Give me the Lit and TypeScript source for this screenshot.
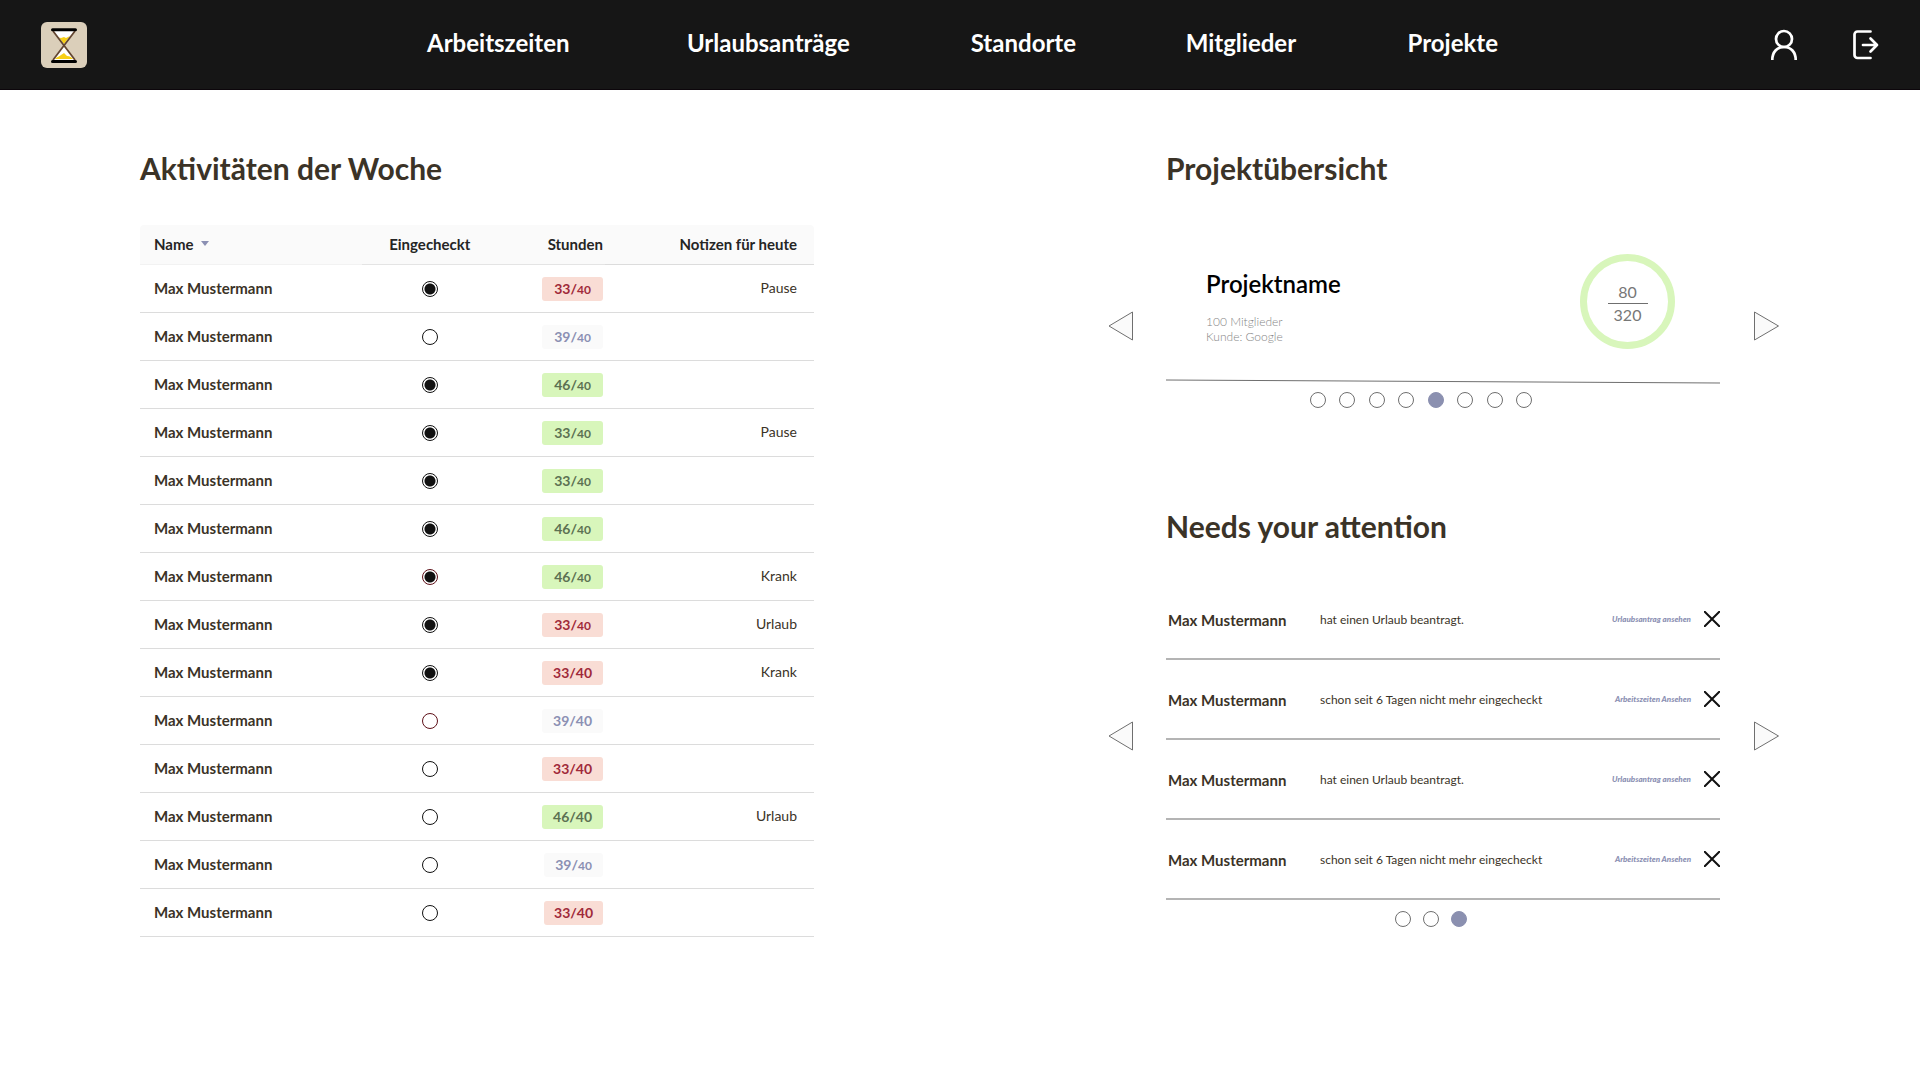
import { LitElement, html, css, svg, nothing } from "lit";
import { customElement, property, state } from "lit/decorators.js";
import { classMap } from "lit/directives/class-map.js";

type Tone = "low" | "near" | "full";

interface Activity {
  present: boolean;
  alert?: boolean;
  hours: number;
  tone: Tone;
  /** Target hours drawn at the same size as the worked hours. */
  even?: boolean;
  narrow?: boolean;
  note?: string;
}

const ACTIVITIES: Activity[] = [
  { present: true, hours: 33, tone: "low", note: "Pause" },
  { present: false, hours: 39, tone: "near" },
  { present: true, hours: 46, tone: "full" },
  { present: true, hours: 33, tone: "full", note: "Pause" },
  { present: true, hours: 33, tone: "full" },
  { present: true, hours: 46, tone: "full" },
  { present: true, alert: true, hours: 46, tone: "full", note: "Krank" },
  { present: true, hours: 33, tone: "low", note: "Urlaub" },
  { present: true, hours: 33, tone: "low", even: true, note: "Krank" },
  { present: false, alert: true, hours: 39, tone: "near", even: true },
  { present: false, hours: 33, tone: "low", even: true },
  { present: false, hours: 46, tone: "full", even: true, note: "Urlaub" },
  { present: false, hours: 39, tone: "near", narrow: true },
  { present: false, hours: 33, tone: "low", even: true, narrow: true },
];

const VACATION = { text: "hat einen Urlaub beantragt.", link: "Urlaubsantrag ansehen" };
const ABSENT = { text: "schon seit 6 Tagen nicht mehr eingecheckt", link: "Arbeitszeiten Ansehen" };
const NOTICES = [VACATION, ABSENT, VACATION, ABSENT];

const NAV = ["Arbeitszeiten", "Urlaubsanträge", "Standorte", "Mitglieder", "Projekte"];

const reset = css`
  *, *::before, *::after { box-sizing: border-box; }
  button {
    padding: 0;
    border: 0;
    background: none;
    font: inherit;
    color: inherit;
    cursor: pointer;
  }
  a { color: inherit; text-decoration: none; }
  svg { display: block; }
`;

@customElement("top-bar")
class TopBar extends LitElement {
  static styles = [reset, css`
    :host { display: block; }
    .bar {
      display: grid;
      grid-template-columns: 427fr 1071fr 422fr;
      align-items: center;
      height: 90px;
      background: #161616;
      border-bottom: 1px solid #0c060b;
      color: #fff;
    }
    .brand { justify-self: start; margin-left: 41px; }
    .nav {
      display: grid;
      grid-template-columns: 260fr 284fr 215fr 222fr 90fr;
      font-size: 24px;
      font-weight: 700;
      line-height: 30px;
      padding-bottom: 4px;
      white-space: nowrap;
    }
    .tools {
      display: flex;
      justify-content: flex-end;
      align-items: center;
      gap: 54px;
      padding-right: 40px;
    }
  `];

  render() {
    return html`
      <header class="bar">
        <a class="brand" href="#" aria-label="Startseite">
          <svg width="46" height="46" viewBox="0 0 46 46">
            <rect width="46" height="46" rx="6" fill="#dbcfba" />
            <path d="M12 9h22L23 23z M23 23l11 15H12z" fill="#fff" />
            <path d="M18 15.500l2 .5 3-1 2 1 4-2-6 8z" fill="#f7cf16" />
            <path d="M14 37c3-3 4-2 6-4l3-2 3 3c3 0 4 1 6 3z" fill="#f7cf16" />
            <path d="M12 9l22 29M34 9L12 38" stroke="#634632" stroke-width="1.800" fill="none" />
            <path d="M11.500 7.800h23M11.500 39.500h23" stroke="#000" stroke-width="3" stroke-linecap="round" />
          </svg>
        </a>
        <nav class="nav">${NAV.map((n) => html`<a href="#">${n}</a>`)}</nav>
        <div class="tools">
          <button aria-label="Profil">
            <svg width="28" height="32" viewBox="0 0 28 32" fill="none" stroke="#fff" stroke-width="2.700">
              <circle cx="14" cy="10" r="8" />
              <path d="M2.300 31C2.300 23 7 18 14 18s11.700 5 11.700 13" />
            </svg>
          </button>
          <button aria-label="Abmelden">
            <svg width="28" height="32" viewBox="0 0 28 32" fill="none" stroke="#fff" stroke-width="2.700"
              stroke-linecap="round" stroke-linejoin="round">
              <path d="M18.500 2.500H5.500a3 3 0 0 0-3 3v20.500a3 3 0 0 0 3 3h13" />
              <path d="M11 16h14M18.500 9.500l6.500 6.500-6.500 6.500" />
            </svg>
          </button>
        </div>
      </header>
    `;
  }
}

@customElement("activity-table")
class ActivityTable extends LitElement {
  static styles = [reset, css`
    :host { display: block; }
    .table {
      width: 100%;
      border-collapse: separate;
      border-spacing: 0;
      table-layout: fixed;
      font-size: 14px;
      line-height: 18px;
    }
    .c-name { width: 33%; }
    .c-check { width: 20%; }
    .c-hours { width: 16%; }
    .head th {
      height: 40px;
      padding: 0 0 2px;
      font-size: 15px;
      font-weight: 700;
      color: #252525;
      background: #fafafa;
      border-bottom: 1px solid #e4e4e4;
    }
    .head th:first-child { border-radius: 4px 0 0; border-color: #f2f2f2; }
    .head th:last-child { border-radius: 0 4px 0 0; border-color: #dcdcdc; }
    .row th, .row td {
      height: 48px;
      padding: 0;
      border-bottom: 1px solid #dcdcdc;
    }
    .table .name { padding-left: 14px; text-align: left; }
    .row .name { padding-bottom: 1px; font-weight: 700; font-size: 15px; color: #3b3327; }
    .check { text-align: center; }
    .table .hours { padding-right: 2px; text-align: right; }
    .table .note { padding-right: 17px; text-align: right; }
    .row .note { padding-bottom: 1px; color: #3b3327; }
    .sort { display: inline-flex; align-items: center; gap: 7px; }
    .box {
      appearance: none;
      display: block;
      width: 16px;
      height: 16px;
      margin: 0 auto;
      border: 1px solid #111;
      border-radius: 50%;
      background: #fff;
    }
    .box:checked { background: radial-gradient(circle, #111 5px, #fff 6px); }
    .box.alert { border-color: #5e1119; }
    .badge {
      display: inline-flex;
      justify-content: center;
      align-items: baseline;
      width: 61px;
      height: 24px;
      border-radius: 3px;
      font-weight: 700;
      line-height: 24px;
      vertical-align: middle;
    }
    .badge.narrow { width: 59px; }
    .target { font-size: 12px; }
    .even .target { font-size: 14px; }
    .low { background: #f9ddd5; color: #a02a3a; }
    .near { background: #fafafa; color: #8b90b3; }
    .full { background: #d8f6bb; color: #5c7152; }
  `];

  private row(a: Activity) {
    const badge = { badge: true, even: !!a.even, narrow: !!a.narrow, [a.tone]: true };
    return html`
      <tr class="row">
        <th class="name" scope="row">Max Mustermann</th>
        <td class="check">
          <input type="checkbox" class=${classMap({ box: true, alert: !!a.alert })}
            aria-label="Max Mustermann eingecheckt" .checked=${a.present} />
        </td>
        <td class="hours">
          <span class=${classMap(badge)}>${a.hours}/<span class="target">40</span></span>
        </td>
        <td class="note">${a.note ?? nothing}</td>
      </tr>
    `;
  }

  render() {
    return html`
      <table class="table">
        <colgroup><col class="c-name" /><col class="c-check" /><col class="c-hours" /><col /></colgroup>
        <thead>
          <tr class="head">
            <th class="name" scope="col">
              <button class="sort">Name
                <svg width="8" height="5" viewBox="0 0 8 5"><path d="M0 0h8L4 5z" fill="#8b90b3" /></svg>
              </button>
            </th>
            <th class="check" scope="col">Eingecheckt</th>
            <th class="hours" scope="col">Stunden</th>
            <th class="note" scope="col">Notizen für heute</th>
          </tr>
        </thead>
        <tbody>${ACTIVITIES.map((a) => this.row(a))}</tbody>
      </table>
    `;
  }
}

@customElement("carousel-panel")
class CarouselPanel extends LitElement {
  @property({ type: Number }) count = 0;
  @property({ type: Number }) active = 0;

  static styles = [reset, css`
    :host {
      display: grid;
      grid-template-columns: 58px minmax(0, 1fr) 60px;
      align-items: center;
    }
    .next { justify-self: end; }
    .prev { justify-self: start; }
    .arrow svg { fill: #fafafa; stroke: #6f6f6f; }
    .dots {
      display: flex;
      justify-content: space-between;
      width: var(--dots-width, auto);
      margin-left: var(--dots-inset, 0);
      margin-top: var(--dots-top, 8px);
    }
    .dot { width: 16px; height: 16px; border: 1px solid #6f6f6f; border-radius: 50%; }
    .dot.active { background: #8b90b0; border-color: #8b90b0; }
  `];

  private go(step: number) {
    this.active = (this.active + step + this.count) % this.count;
  }

  render() {
    return html`
      <button class="arrow prev" aria-label="Zurück" @click=${() => this.go(-1)}>
        <svg width="26" height="30" viewBox="0 0 26 30"><path d="M24.500 1v28L1 15z" /></svg>
      </button>
      <div>
        <slot></slot>
        <div class="dots">
          ${Array.from({ length: this.count }, (_, i) => html`
            <button class=${classMap({ dot: true, active: i === this.active })}
              aria-label="Seite ${i + 1}" @click=${() => (this.active = i)}></button>`)}
        </div>
      </div>
      <button class="arrow next" aria-label="Weiter" @click=${() => this.go(1)}>
        <svg width="26" height="30" viewBox="0 0 26 30"><path d="M.5 1v28L24.500 15z" /></svg>
      </button>
    `;
  }
}

@customElement("app-root")
class AppRoot extends LitElement {
  @state() private notices = NOTICES.map((n, id) => ({ ...n, id }));

  static styles = [reset, css`
    :host {
      display: block;
      min-height: 100vh;
      background: #fff;
      color: #3b3327;
      font-family: Lato, "Liberation Sans", sans-serif;
    }
    .main {
      display: grid;
      grid-template-columns: 674fr 294fr 672fr;
      padding: 60px 140px;
    }
    .side { grid-column: 3; }
    .title { margin: 0; font-size: 30px; font-weight: 700; line-height: 36px; }
    .side .title { padding-left: 58px; }
    .activities { margin-top: 39px; }
    .projects { margin-top: 58px; margin-bottom: 100px; --dots-width: 222px; --dots-inset: 144px; }
    .attention { --dots-width: 72px; --dots-inset: 229px; --dots-top: 11px; }
    .project {
      display: flex;
      justify-content: space-between;
      padding: 10px 45px 29px 40px;
    }
    .facts { padding-top: 15px; }
    .project-name { margin: 0 0 16px; font-size: 24px; font-weight: 600; line-height: 29px; color: #000; }
    .meta { margin: 0; font-size: 12px; font-weight: 300; line-height: 15px; color: #858585; }
    .ring {
      display: flex;
      flex-direction: column;
      align-items: center;
      justify-content: center;
      width: 95px;
      height: 95px;
      padding-top: 3px;
      border: 7px solid #d8f6bb;
      border-radius: 50%;
      font-size: 16px;
      line-height: 22px;
      color: #777;
    }
    .done { border-bottom: 1px solid #6f6f6f; width: 40px; text-align: center; }
    .rule { width: 100%; height: 6px; }
    .list { list-style: none; margin: 0; padding: 36px 0 0; }
    .notice {
      display: grid;
      grid-template-columns: 152px 1fr auto 16px;
      align-items: center;
      height: 80px;
      padding-left: 2px;
      border-bottom: 2px solid #b4b4b4;
    }
    .who, .what { padding-top: 1px; line-height: 18px; }
    .who { font-size: 15px; font-weight: 700; }
    .what { font-size: 12px; }
    .link, .close { padding-bottom: 1px; }
    .link { margin-right: 13px; font-size: 8px; font-weight: 900; font-style: italic; line-height: 10px; color: #8b90b3; }
  `];

  private dismiss(id: number) {
    this.notices = this.notices.filter((n) => n.id !== id);
  }

  render() {
    return html`
      <top-bar></top-bar>
      <main class="main">
        <section>
          <h1 class="title">Aktivitäten der Woche</h1>
          <activity-table class="activities"></activity-table>
        </section>
        <div class="side">
          <section>
            <h2 class="title">Projektübersicht</h2>
            <carousel-panel class="projects" count="8" active="4">
              <div class="project">
                <div class="facts">
                  <h3 class="project-name">Projektname</h3>
                  <p class="meta">100 Mitglieder</p>
                  <p class="meta">Kunde: Google</p>
                </div>
                <div class="ring"><span class="done">80</span><span>320</span></div>
              </div>
              <svg class="rule" viewBox="0 0 554 6" preserveAspectRatio="none">
                ${svg`<path d="M0 2L554 5" stroke="#6f6f6f" stroke-width="1" />`}
              </svg>
            </carousel-panel>
          </section>
          <section>
            <h2 class="title">Needs your attention</h2>
            <carousel-panel class="attention" count="3" active="2">
              <ul class="list">
                ${this.notices.map((n) => html`
                  <li class="notice">
                    <span class="who">Max Mustermann</span>
                    <span class="what">${n.text}</span>
                    <a class="link" href="#">${n.link}</a>
                    <button class="close" aria-label="Schließen" @click=${() => this.dismiss(n.id)}>
                      <svg width="16" height="16" viewBox="0 0 16 16">
                        <path d="M0 0l16 16M16 0L0 16" stroke="#111" stroke-width="2" />
                      </svg>
                    </button>
                  </li>`)}
              </ul>
            </carousel-panel>
          </section>
        </div>
      </main>
    `;
  }
}
